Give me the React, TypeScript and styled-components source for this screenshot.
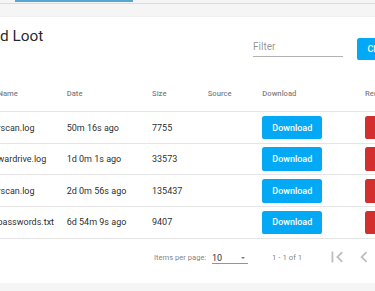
import React from 'react'
import styled, { createGlobalStyle } from 'styled-components'

const GlobalStyle = createGlobalStyle`
  html, body {
    margin: 0;
    padding: 0;
    background: #f5f5f5;
    overflow: hidden;
    font-family: Roboto, "Noto Sans", sans-serif;
  }
`;

const TabHeader = styled.div`
  display: flex;
  height: 3px;
  padding-left: 15px;
  border-bottom: 1px solid rgba(0, 0, 0, 0.1);
`;

const InkBar = styled.div`
  width: 118px;
  height: 2px;
  background: #56a8d3;
`;

// the page is scrolled sideways, so the card runs past both edges
const Card = styled.div`
  margin: 13px -34.5px 0 -18.5px;
  padding-bottom: 7.3px;
  background: #fff;
  box-shadow: 0 2px 1px -1px rgba(0, 0, 0, 0.2), 0 1px 1px 0 rgba(0, 0, 0, 0.14), 0 1px 3px 0 rgba(0, 0, 0, 0.12);
`;

const CardHeader = styled.div`
  display: flex;
  align-items: flex-start;
  height: 58.3px;
  padding: 0 10.5px 0 16px;
`;

const Title = styled.h2`
  flex: 1;
  margin: 8.7px 0 0 -53.2px;
  font-size: 15.4px;
  line-height: 20px;
  font-weight: 400;
  color: rgba(0, 0, 0, 0.87);
  white-space: nowrap;
`;

const FilterInput = styled.input`
  width: 90px;
  margin-top: 22.7px;
  padding: 0 0 2.3px;
  border: none;
  border-bottom: 1px solid rgba(0, 0, 0, 0.3);
  outline: none;
  background: transparent;
  font-family: Roboto, sans-serif;
  font-size: 10px;
  line-height: 14px;
  height: 14px;
  box-sizing: content-box;
  &::placeholder {
    color: rgba(0, 0, 0, 0.45);
  }
`;

const FlatButton = styled.button<{ $color: string }>`
  display: flex;
  align-items: center;
  justify-content: center;
  border: none;
  border-radius: 2.6px;
  background: ${p => p.$color};
  color: #fff;
  font-family: Roboto, sans-serif;
  font-size: 9px;
  font-weight: 500;
  padding: 0;
  cursor: pointer;
`;

const ClearButton = styled(FlatButton)`
  margin: 21px 0 0 14px;
  width: 42px;
  height: 22px;
`;

const RowButton = styled(FlatButton)`
  width: 60px;
  height: 23.5px;
`;

const columns = '85.2px 85.3px 55.7px 54.6px 102.7px 80px';

const HeaderRow = styled.div`
  display: grid;
  grid-template-columns: ${columns};
  align-items: center;
  height: 36px;
  border-bottom: 1px solid rgba(0, 0, 0, 0.1);
  font-size: 7.7px;
  font-weight: 500;
  color: rgba(0, 0, 0, 0.54);
`;

const Row = styled.div`
  display: grid;
  grid-template-columns: ${columns};
  align-items: center;
  height: 30.6px;
  border-bottom: 1px solid rgba(0, 0, 0, 0.1);
  font-size: 9px;
  color: rgba(0, 0, 0, 0.87);
`;

const Cell = styled.div<{ $first?: boolean }>`
  padding-left: ${p => (p.$first ? '16px' : '0')};
  white-space: nowrap;
`;

const Paginator = styled.div`
  display: flex;
  align-items: center;
  height: 37px;
  padding-left: 172.5px;
  font-size: 7.6px;
  color: rgba(0, 0, 0, 0.54);
`;

const PageLabel = styled.span`
  margin-right: 5.7px;
`;

const Select = styled.div`
  display: flex;
  align-items: center;
  justify-content: space-between;
  width: 36px;
  height: 11px;
  padding-top: 2px;
  border-bottom: 1px solid rgba(0, 0, 0, 0.42);
  font-size: 9px;
  color: rgba(0, 0, 0, 0.87);
`;

const Arrow = styled.span`
  width: 0;
  height: 0;
  margin-right: 3px;
  border-left: 2.6px solid transparent;
  border-right: 2.6px solid transparent;
  border-top: 2.6px solid rgba(0, 0, 0, 0.54);
`;

const RangeLabel = styled.span`
  margin: 0 22px 0 24px;
  font-size: 7.8px;
`;

const IconButton = styled.button`
  display: flex;
  align-items: center;
  justify-content: center;
  width: 26.5px;
  height: 26.5px;
  padding: 0;
  border: none;
  background: transparent;
  color: rgba(0, 0, 0, 0.26);
  svg {
    flex: none;
  }
`;

const loot = [
  { name: 'rscan.log', date: '50m 16s ago', size: 7755 },
  { name: 'wardrive.log', date: '1d 0m 1s ago', size: 33573 },
  { name: 'rscan.log', date: '2d 0m 56s ago', size: 135437 },
  { name: 'passwords.txt', date: '6d 54m 9s ago', size: 9407 },
];

const App = () => {
  return (
    <>
      <GlobalStyle />
      <TabHeader>
        <InkBar />
      </TabHeader>
      <Card>
        <CardHeader>
          <Title>Collected Loot</Title>
          <FilterInput placeholder="Filter" />
          <ClearButton $color="#03a9f4">Clear</ClearButton>
        </CardHeader>
        <HeaderRow>
          <Cell $first>Name</Cell>
          <Cell>Date</Cell>
          <Cell>Size</Cell>
          <Cell>Source</Cell>
          <Cell>Download</Cell>
          <Cell>Remove</Cell>
        </HeaderRow>
        {loot.map((l, i) => (
          <Row key={i}>
            <Cell $first>{l.name}</Cell>
            <Cell>{l.date}</Cell>
            <Cell>{l.size}</Cell>
            <Cell></Cell>
            <Cell><RowButton $color="#03a9f4">Download</RowButton></Cell>
            <Cell><RowButton $color="#d32f2f">Remove</RowButton></Cell>
          </Row>
        ))}
        <Paginator>
          <PageLabel>Items per page:</PageLabel>
          <Select>
            10
            <Arrow />
          </Select>
          <RangeLabel>1 - 1 of 1</RangeLabel>
          <IconButton>
            <svg width="22" height="22" viewBox="0 0 24 24" fill="currentColor">
              <path d="M18.41 16.59L13.82 12l4.59-4.59L17 6l-6 6 6 6zM6 6h2v12H6z" />
            </svg>
          </IconButton>
          <IconButton>
            <svg width="22" height="22" viewBox="0 0 24 24" fill="currentColor">
              <path d="M15.41 7.41L14 6l-6 6 6 6 1.41-1.41L10.83 12z" />
            </svg>
          </IconButton>
        </Paginator>
      </Card>
    </>
  )
}
export default App
